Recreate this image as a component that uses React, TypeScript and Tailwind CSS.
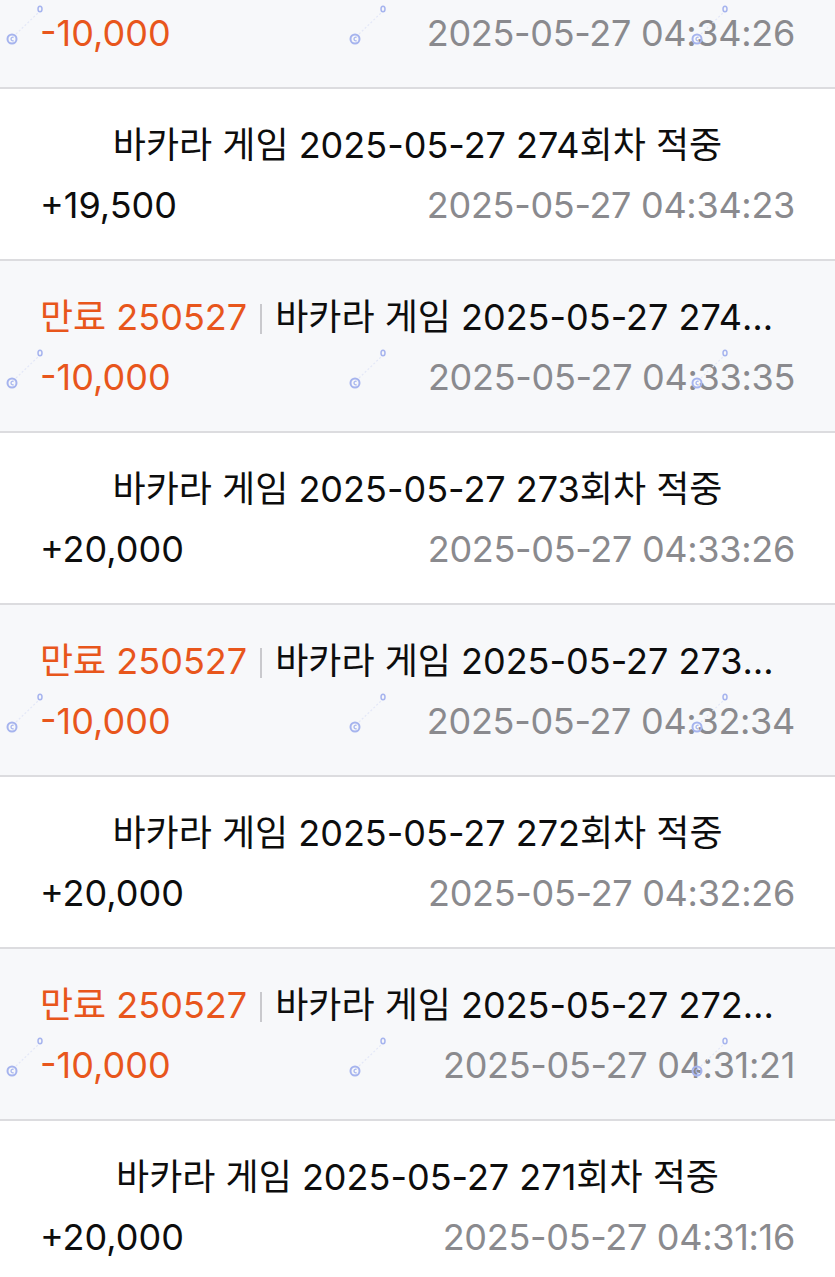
import React from "react";

type Row = {
  expired: boolean;
  title: string;
  amount: string;
  time: string;
};

const rows: Row[] = [
  { expired: true, title: "바카라 게임 2025-05-27 275회차 적중", amount: "-10,000", time: "2025-05-27 04:34:26" },
  { expired: false, title: "바카라 게임 2025-05-27 274회차 적중", amount: "+19,500", time: "2025-05-27 04:34:23" },
  { expired: true, title: "바카라 게임 2025-05-27 274회차 적중", amount: "-10,000", time: "2025-05-27 04:33:35" },
  { expired: false, title: "바카라 게임 2025-05-27 273회차 적중", amount: "+20,000", time: "2025-05-27 04:33:26" },
  { expired: true, title: "바카라 게임 2025-05-27 273회차 적중", amount: "-10,000", time: "2025-05-27 04:32:34" },
  { expired: false, title: "바카라 게임 2025-05-27 272회차 적중", amount: "+20,000", time: "2025-05-27 04:32:26" },
  { expired: true, title: "바카라 게임 2025-05-27 272회차 적중", amount: "-10,000", time: "2025-05-27 04:31:21" },
  { expired: false, title: "바카라 게임 2025-05-27 271회차 적중", amount: "+20,000", time: "2025-05-27 04:31:16" },
];

function Mark({ x }: { x: number }) {
  return (
    <svg
      className="pointer-events-none absolute top-[86px]"
      style={{ left: x - 6 }}
      width="40"
      height="44"
      viewBox="0 0 40 44"
      fill="none"
    >
      <line x1="10" y1="31" x2="32" y2="10" stroke="#e3e7f7" strokeWidth="1.2" strokeDasharray="2 2" />
      <circle cx="6" cy="36" r="4.5" stroke="#a6b4ee" strokeWidth="2" />
      <path d="M7.6 34.4 A1.8 1.8 0 1 0 7.6 37.6" stroke="#a6b4ee" strokeWidth="1.2" />
      <ellipse cx="34" cy="6" rx="2" ry="2.8" stroke="#a6b4ee" strokeWidth="1.5" />
    </svg>
  );
}

function ListRow({ row }: { row: Row }) {
  return (
    <div
      className={`relative flex h-[172px] flex-col justify-center gap-[16px] border-b-2 border-[#dcdcdf] px-[40px] pt-[2px] ${
        row.expired ? "bg-[#f7f8fa]" : "bg-white"
      }`}
    >
      <div className="truncate text-center text-[36px] leading-[44px] text-[#0d0d0d]">
        {row.expired ? (
          <>
            <span className="text-[#e8561c]">만료 250527</span>
            <span className="mx-[13px] inline-block h-[30px] w-[2px] bg-[#c9c9cd] align-[-4px]" />
            <span>{row.title}</span>
          </>
        ) : (
          row.title
        )}
      </div>
      <div className="flex items-center justify-between text-[36px] leading-[44px]">
        <span className={row.expired ? "text-[#e8561c]" : "text-[#0d0d0d]"}>{row.amount}</span>
        <span className="tracking-[-0.3px] text-[#8a8a8e]">{row.time}</span>
      </div>
      {row.expired && (
        <>
          <Mark x={12} />
          <Mark x={355} />
          <Mark x={697} />
        </>
      )}
    </div>
  );
}

export default function App() {
  return (
    <div className="h-[1277px] w-[835px] overflow-hidden bg-white font-['Inter','Noto_Sans_CJK_KR',sans-serif]">
      <div className="mt-[-83px]">
        {rows.map((r, i) => (
          <ListRow key={i} row={r} />
        ))}
      </div>
    </div>
  );
}
